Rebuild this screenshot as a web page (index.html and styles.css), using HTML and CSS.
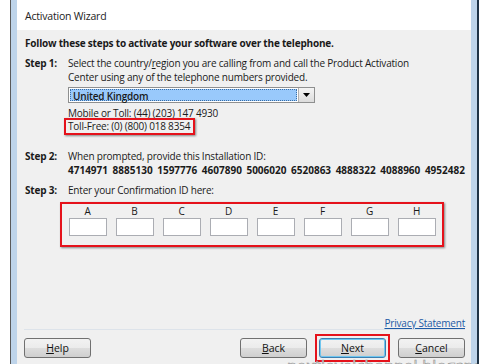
FILE: index.html
```html
<!DOCTYPE html>
<html lang="en">
<head>
  <meta charset="UTF-8">
  <title>Activation Wizard</title>
  <link rel="stylesheet" href="styles.css">
</head>
<body>
  <div class="window">
    <div class="dialog">
      <div class="header">Activation Wizard</div>

      <div class="content">
        <p class="lead">Follow these steps to activate your software over the telephone.</p>

        <!-- Step 1 -->
        <div class="step">
          <span class="step-label">Step 1:</span>
          <div class="step-body">
            <p class="intro">Select the country/<u>r</u>egion you are calling from and call the Product Activation<br>Center using any of the telephone numbers provided.</p>
            <div class="dropdown">
              <span class="dropdown-value">United Kingdom</span>
              <span class="dropdown-btn">
                <svg width="7" height="4" viewBox="0 0 7 4"><path d="M0 0h7L3.5 4z" fill="#000"/></svg>
              </span>
            </div>
            <p class="phone">Mobile or Toll: (44) (203) 147 4930</p>
            <p class="phone"><span class="mark">Toll-Free: (0) (800) 018 8354</span></p>
          </div>
        </div>

        <!-- Step 2 -->
        <div class="step step-2">
          <span class="step-label">Step 2:</span>
          <div class="step-body">
            <p>When prompted, provide this Installation ID:</p>
            <p class="install-id">
              <span>4714971</span><span>8885130</span><span>1597776</span><span>4607890</span><span>5006020</span><span>6520863</span><span>4888322</span><span>4088960</span><span>4952482</span>
            </p>
          </div>
        </div>

        <!-- Step 3 -->
        <div class="step step-3">
          <span class="step-label">Step 3:</span>
          <div class="step-body">
            <p>Enter your Confirmation ID here:</p>
          </div>
        </div>

        <div class="confirm-box">
          <div class="field"><span>A</span><input type="text"></div>
          <div class="field"><span>B</span><input type="text"></div>
          <div class="field"><span>C</span><input type="text"></div>
          <div class="field"><span>D</span><input type="text"></div>
          <div class="field"><span>E</span><input type="text"></div>
          <div class="field"><span>F</span><input type="text"></div>
          <div class="field"><span>G</span><input type="text"></div>
          <div class="field"><span>H</span><input type="text"></div>
        </div>

        <div class="privacy"><a href="#">Privacy Statement</a></div>
      </div>

      <div class="footer">
        <button type="button"><u>H</u>elp</button>
        <div class="footer-right">
          <button type="button"><u>B</u>ack</button>
          <span class="mark-btn"><button type="button" class="default-btn"><u>N</u>ext</button></span>
          <button type="button"><u>C</u>ancel</button>
        </div>
      </div>
    </div>
    <div class="watermark">nextlevelchannel.blogspot.com</div>
  </div>
</body>
</html>
```

FILE: styles.css
```css
body {
  margin: 0;
  background: #fff;
  font-family: 'Open Sans', 'DejaVu Sans', sans-serif;
  font-size: 10px;
  letter-spacing: -0.2px;
  color: #1a1a1a;
  overflow: hidden;
}
p {
  margin: 0;
}
.window {
  position: relative;
  margin-left: 10px;
  width: 469px;
  height: 364px;
  border-left: 1px solid #5a5a5a;
  border-right: 2px solid #1f3346;
  box-sizing: border-box;
  overflow: hidden;
}
.dialog {
  height: 100%;
  border-left: 6px solid #bed4ea;
  border-right: 6px solid #bed4ea;
  background: #f0f0f0;
  display: flex;
  flex-direction: column;
}
.header {
  height: 30px;
  line-height: 32px;
  background: #fff;
  padding-left: 8px;
  font-size: 10.5px;
  color: #222;
}
.content {
  flex: 1;
  padding: 7px 6px 0 8px;
  line-height: 12px;
}
.lead {
  font-weight: 700;
}
.step {
  display: flex;
  margin-top: 8px;
}
.step-label {
  width: 43px;
  flex-shrink: 0;
  font-weight: 700;
}
.step-body {
  flex: 1;
}
.intro {
  line-height: 14px;
  margin-top: -1px;
}
.dropdown {
  display: flex;
  width: 247px;
  height: 16px;
  margin-top: 3px;
  border: 1px solid #8e8f8f;
  background: #fff;
  box-sizing: border-box;
}
.dropdown-value {
  flex: 1;
  margin: 1px;
  padding-left: 2px;
  line-height: 12px;
  background: #99c9fb;
  border: 1px dotted #3a6ea5;
  font-weight: 600;
}
.dropdown-btn {
  width: 15px;
  display: flex;
  align-items: center;
  justify-content: center;
  border-left: 1px solid #b0b0b0;
  background: linear-gradient(#f4f4f4, #dcdcdc);
}
.phone {
  margin-top: 4px;
}
.phone + .phone {
  margin-top: -1px;
}
.mark {
  display: inline-block;
  margin-left: -4px;
  padding: 0 3px 1px 2px;
  border: 2px solid #e5121b;
  box-shadow: 1px 1px 2px rgba(0, 0, 0, 0.45);
}
.step-2 {
  margin-top: 15px;
}
.install-id {
  display: flex;
  justify-content: space-between;
  margin-top: 2px;
  font-weight: 700;
  letter-spacing: 0;
}
.step-3 {
  margin-top: 8px;
}
.confirm-box {
  display: flex;
  justify-content: space-around;
  margin: 6px 0 0 35px;
  width: 384px;
  height: 45px;
  padding: 1px 2px 0 2px;
  border: 2px solid #e5121b;
  box-shadow: 1px 1px 2px rgba(0, 0, 0, 0.45);
  box-sizing: border-box;
}
.field {
  display: flex;
  flex-direction: column;
  align-items: center;
  gap: 1px;
}
.field input {
  width: 38px;
  height: 18px;
  border: 1px solid #abadb3;
  box-sizing: border-box;
  background: #fff;
}
.privacy {
  margin-top: 70px;
  text-align: right;
}
.privacy a {
  color: #1c5aa6;
  text-decoration: underline;
}
.footer {
  display: flex;
  justify-content: space-between;
  align-items: center;
  margin: 0 6px 0 7px;
  padding: 8px 0 6px;
  border-top: 1px solid #dde3ea;
}
.footer-right {
  display: flex;
  align-items: center;
  gap: 8px;
}
button {
  width: 67px;
  height: 20px;
  padding: 0;
  font-family: inherit;
  font-size: 10.5px;
  color: #111;
  border: 1px solid #707070;
  border-radius: 3px;
  background: linear-gradient(#f2f2f2 0%, #ebebeb 50%, #dddddd 51%, #cfcfcf 100%);
}
.mark-btn {
  display: inline-flex;
  padding: 2px;
  border: 2px solid #e5121b;
  margin: -4px 0;
}
.default-btn {
  border-color: #3c7fb1;
  box-shadow: inset 0 0 0 1px #6fc6ef;
}
.watermark {
  position: absolute;
  left: 276px;
  top: 355px;
  font-size: 16px;
  letter-spacing: 0.3px;
  color: #f4f4f4;
  -webkit-text-stroke: 0.6px #8c8c8c;
  white-space: nowrap;
}
```
